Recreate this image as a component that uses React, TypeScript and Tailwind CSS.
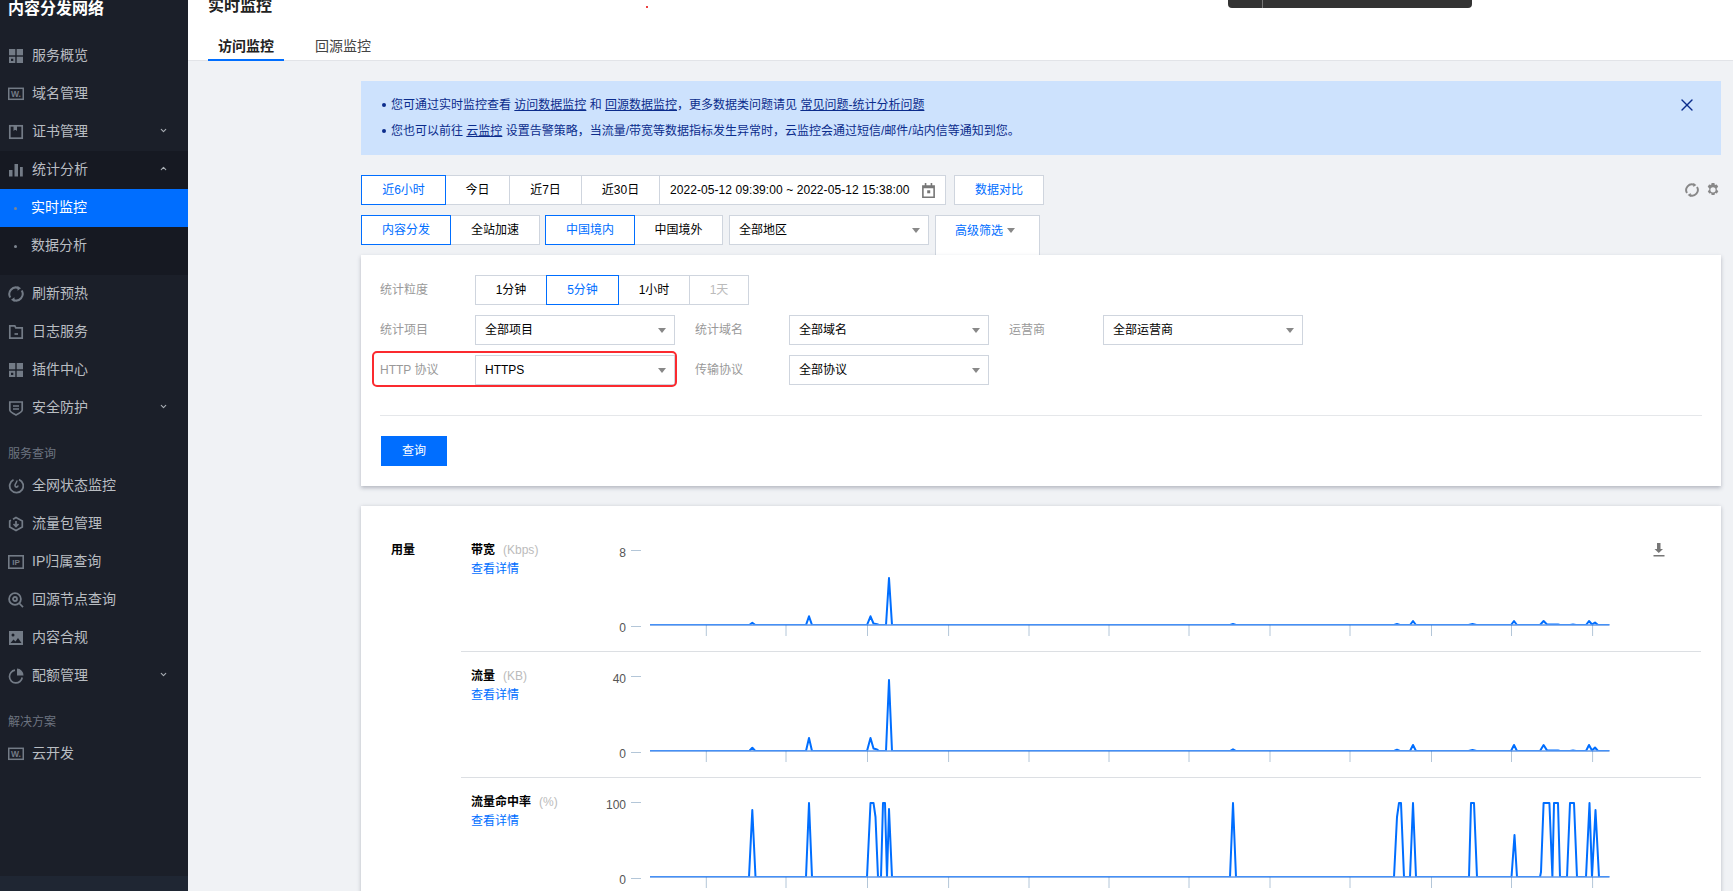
import { ChevronDown, ChevronUp, X } from "lucide-react";
import type { ReactNode } from "react";

type P = [number, number];
const s = (x: number, h: number, w = 3): P[] => [[x - w, 0], [x, h], [x + w, 0]];

const chart1: P[] = [
  [650, 0], ...s(752.3, 2.3), ...s(809, 8.7),
  [867, 0], [870.5, 8.7], [873.5, 1.5], [877, 0.8], [879, 0], [886, 0], [889, 47], [892, 0],
  ...s(1233, 1), ...s(1397, 1), ...s(1413, 4), ...s(1472.5, 1, 4), ...s(1514, 4),
  [1540, 0], [1543.6, 4], [1547, 0.6], [1558, 0.6], [1560, 0], ...s(1573, 0.6),
  [1586, 0], [1589, 4], [1592, 0.6], [1595, 2.5], [1598, 0], [1609.5, 0],
];
const chart2: P[] = [
  [650, 0], ...s(752.3, 3.3), ...s(809, 13),
  [867, 0], [870.5, 13], [873.5, 2.5], [877, 1.5], [879, 0], [886, 0], [889, 71], [892, 0],
  ...s(1233, 1.7), ...s(1397, 1.2), ...s(1413, 6), ...s(1472.5, 1, 4), ...s(1514, 6),
  [1540, 0], [1543.6, 6], [1547, 0.6], [1558, 0.6], [1560, 0], ...s(1573, 0.6),
  [1586, 0], [1589, 6], [1592, 0.6], [1595, 3.5], [1598, 0], [1609.5, 0],
];
const chart3: P[] = [
  [650, 0], [749, 0], [752.3, 67], [755.5, 0], [806, 0], [809, 74], [812, 0],
  [867, 0], [870.5, 74], [873.5, 74], [875.5, 60], [878, 0], [881, 0], [883, 74], [885, 74], [887, 0], [889, 68], [892, 0],
  [1230, 0], [1233, 74], [1236, 0],
  [1394, 0], [1397, 60], [1399, 74], [1401, 74], [1404, 0], [1410, 0], [1413, 74], [1416, 0],
  [1469, 0], [1471, 74], [1474, 74], [1477, 0], [1511.5, 0], [1514.5, 42], [1517, 0],
  [1540, 0], [1541, 5], [1543.6, 74], [1549.4, 74], [1552.4, 0], [1554, 74], [1558, 74], [1560, 0], [1567, 0],
  [1570, 74], [1574, 74], [1577, 0], [1586, 0], [1589.5, 74], [1592, 0], [1595.5, 67], [1599, 0], [1609.5, 0],
];

const xTicks = [706.3, 786, 867.5, 948.6, 1029, 1109, 1189, 1270, 1350, 1431.5, 1511.5, 1592.6];
const ic = "#737b86";

function GridIcon() {
  return (
    <svg width="16" height="16" viewBox="0 0 16 16" fill={ic}>
      <rect x="1" y="1" width="6.300" height="6.300" />
      <rect x="8.700" y="1" width="6.300" height="6.300" />
      <path fillRule="evenodd" d="M1 8.700h6.300V15H1zM3 10.700v2.300h2.300v-2.300z" />
      <rect x="8.700" y="8.700" width="6.300" height="6.300" />
    </svg>
  );
}
function WIcon() {
  return (
    <svg width="16" height="16" viewBox="0 0 16 16">
      <rect x="0.750" y="2.300" width="14.500" height="11" fill="none" stroke={ic} strokeWidth="1.500" />
      <text x="8" y="11" textAnchor="middle" fontSize="8.500" fontWeight="700" fill={ic}>W.</text>
    </svg>
  );
}
function CertIcon() {
  return (
    <svg width="16" height="16" viewBox="0 0 16 16" fill="none" stroke={ic} strokeWidth="1.700">
      <rect x="1.800" y="1.800" width="12.400" height="12.400" />
      <path d="M5.500 2v5l1.300-1h1L9 7V2z" fill={ic} stroke="none" />
    </svg>
  );
}
function BarsIcon() {
  return (
    <svg width="16" height="16" viewBox="0 0 16 16" fill={ic}>
      <rect x="1" y="8" width="3.500" height="6.500" />
      <rect x="6.500" y="2" width="3.500" height="12.500" />
      <rect x="12" y="5" width="2.800" height="9.500" />
    </svg>
  );
}
function RefreshIcon({ color = ic, size = 16, w = 2 }: { color?: string; size?: number; w?: number }) {
  return (
    <svg width={size} height={size} viewBox="0 0 16 16" fill="none" stroke={color} strokeWidth={w}>
      <path d="M2.300 11.500A6.600 6.600 0 0 1 10.500 2" />
      <path d="M13.700 4.500A6.600 6.600 0 0 1 5.500 14" />
      <path d="M9.500 0l3.500 2.300-3.500 2.400z" fill={color} stroke="none" />
      <path d="M6.500 16l-3.500-2.300 3.500-2.400z" fill={color} stroke="none" />
    </svg>
  );
}
function GearIcon() {
  return (
    <svg width="14" height="14" viewBox="0 0 14 14" fill="#888">
      <path
        fillRule="evenodd"
        d="M5.600 0h2.800l.5 2 1.900-.6 1.400 2.400-1.500 1.500.1 1.400 1.500 1.500-1.400 2.400-1.900-.6-.5 2H5.600l-.5-2-1.900.6-1.400-2.400 1.500-1.500L3.200 5.300 1.700 3.800l1.400-2.400 2 .6zM7 4.200a2.600 2.600 0 1 0 0 5.200 2.600 2.600 0 0 0 0-5.200z"
      />
    </svg>
  );
}
function FolderIcon() {
  return (
    <svg width="16" height="16" viewBox="0 0 16 16" fill="none" stroke={ic} strokeWidth="1.700">
      <path d="M1.800 14.200V1.800h5l1 2h6.400v10.400z" />
      <path d="M6.500 10h3.500" />
    </svg>
  );
}
function ShieldIcon() {
  return (
    <svg width="16" height="16" viewBox="0 0 16 16" fill="none" stroke={ic} strokeWidth="1.700">
      <path d="M1.800 2h12.400v8c0 2-3.400 3.600-6.200 5-2.800-1.400-6.200-3-6.200-5z" />
      <path d="M5 6h6M5 9h6" />
    </svg>
  );
}
function GaugeIcon() {
  return (
    <svg width="16" height="16" viewBox="0 0 16 16" fill="none" stroke={ic} strokeWidth="1.800">
      <path d="M5.500 1.800A6.800 6.800 0 1 0 11 1.600" />
      <path d="M8.800 2.500c.4 2-1.800 3-1.800 5 0 1 .7 1.600 1.400 1.600S10 8.400 10 7.500" strokeWidth="1.600" />
    </svg>
  );
}
function PackIcon() {
  return (
    <svg width="16" height="16" viewBox="0 0 16 16" fill="none" stroke={ic} strokeWidth="1.700">
      <path d="M5 3.200 8 1.500l6.300 3.400v6.200L8 14.500 1.700 11.100V4.900L3 4.200" />
      <path d="M8 5v5M5.500 8 8 10.500 10.500 8" />
    </svg>
  );
}
function IpIcon() {
  return (
    <svg width="16" height="16" viewBox="0 0 16 16">
      <rect x="0.800" y="1.800" width="14.400" height="12.400" fill="none" stroke={ic} strokeWidth="1.600" />
      <text x="8" y="11" textAnchor="middle" fontSize="8" fontWeight="700" fill={ic}>IP</text>
    </svg>
  );
}
function SearchIcon() {
  return (
    <svg width="16" height="16" viewBox="0 0 16 16" fill="none" stroke={ic} strokeWidth="1.800">
      <circle cx="7" cy="7" r="5.900" />
      <circle cx="7" cy="7" r="2" />
      <path d="M11 11l4 4.200" />
    </svg>
  );
}
function ImageIcon() {
  return (
    <svg width="16" height="16" viewBox="0 0 16 16" fill={ic}>
      <path fillRule="evenodd" d="M1 1h14v14H1zM5 3.500a1.500 1.500 0 1 0 0 3 1.500 1.500 0 0 0 0-3zM2.500 13l3-3.500 2 2L10 8l3.500 5z" />
    </svg>
  );
}
function PieIcon() {
  return (
    <svg width="16" height="16" viewBox="0 0 16 16" fill="none" stroke={ic} strokeWidth="1.700">
      <path d="M7 2.200A6.400 6.400 0 1 0 14.200 9.500" />
      <path d="M9 .6a6.700 6.700 0 0 1 6.500 6.900H9z" fill={ic} stroke="none" />
    </svg>
  );
}
function CalendarIcon() {
  return (
    <svg width="15" height="15" viewBox="0 0 14 14" fill="#777">
      <path fillRule="evenodd" d="M1 2h2.500V0h1.500v2h4V0h1.500v2H13v12H1zM2.500 5v7.500h9V5z" />
      <rect x="5.800" y="6.800" width="2.800" height="2.800" />
    </svg>
  );
}

function Caret() {
  return <span className="h-0 w-0 border-x-[4px] border-t-[5px] border-x-transparent border-t-[#888]" />;
}

function NavRow({ icon, label, sub, active, arrow }: { icon?: ReactNode; label: string; sub?: boolean; active?: boolean; arrow?: "down" | "up" }) {
  return (
    <div className={"flex h-[38px] items-center text-[14px] " + (active ? "bg-[#006eff] text-white" : "text-[#b9bdc2]")}>
      {sub ? (
        <span className="mr-[14px] ml-[14px] h-[3px] w-[3px] rounded-full bg-[#7d8590]" />
      ) : (
        <span className="mr-[8px] ml-[8px] flex w-[16px] items-center justify-center">{icon}</span>
      )}
      <span className="pb-[2px]">{label}</span>
      {arrow === "down" && <ChevronDown size={9} strokeWidth={3} className="mt-[-3px] mr-[20px] ml-auto text-[#a8adb3]" />}
      {arrow === "up" && <ChevronUp size={9} strokeWidth={3} className="mt-[-3px] mr-[20px] ml-auto text-[#a8adb3]" />}
    </div>
  );
}

function Sidebar() {
  return (
    <aside className="flex h-[891px] w-[188px] shrink-0 flex-col bg-[#1b1f29]">
      <div className="h-[37px] pl-[8px] text-[16px] leading-[18px] font-bold text-white">内容分发网络</div>
      <NavRow icon={<GridIcon />} label="服务概览" />
      <NavRow icon={<WIcon />} label="域名管理" />
      <NavRow icon={<CertIcon />} label="证书管理" arrow="down" />
      <div className="bg-[#161922] pb-[10px]">
        <NavRow icon={<BarsIcon />} label="统计分析" arrow="up" />
        <NavRow sub active label="实时监控" />
        <NavRow sub label="数据分析" />
      </div>
      <NavRow icon={<RefreshIcon />} label="刷新预热" />
      <NavRow icon={<FolderIcon />} label="日志服务" />
      <NavRow icon={<GridIcon />} label="插件中心" />
      <NavRow icon={<ShieldIcon />} label="安全防护" arrow="down" />
      <div className="h-[40px] pt-[18px] pl-[8px] text-[12px] leading-[18px] text-[#6d7480]">服务查询</div>
      <NavRow icon={<GaugeIcon />} label="全网状态监控" />
      <NavRow icon={<PackIcon />} label="流量包管理" />
      <NavRow icon={<IpIcon />} label="IP归属查询" />
      <NavRow icon={<SearchIcon />} label="回源节点查询" />
      <NavRow icon={<ImageIcon />} label="内容合规" />
      <NavRow icon={<PieIcon />} label="配额管理" arrow="down" />
      <div className="h-[40px] pt-[18px] pl-[8px] text-[12px] leading-[18px] text-[#6d7480]">解决方案</div>
      <NavRow icon={<WIcon />} label="云开发" />
      <div className="mt-auto h-[15px] bg-[#1f2633]" />
    </aside>
  );
}

function Seg({ label, active, disabled, className = "" }: { label: ReactNode; active?: boolean; disabled?: boolean; className?: string }) {
  return (
    <div
      className={
        "-ml-px flex h-[30px] items-center justify-center border bg-white text-[12px] first:ml-0 " +
        (active ? "relative z-10 border-[#006eff] text-[#006eff] " : "border-[#cfd5de] ") +
        (disabled ? "text-[#bbb] " : active ? "" : "text-black ") +
        className
      }
    >
      {label}
    </div>
  );
}

function Select({ value, className = "w-[200px]" }: { value: string; className?: string }) {
  return (
    <div className={"flex h-[30px] items-center justify-between border border-[#cfd5de] bg-white pr-[8px] pl-[9px] text-[12px] text-black " + className}>
      <span>{value}</span>
      <Caret />
    </div>
  );
}

function Label({ children, className = "w-[94px]" }: { children: ReactNode; className?: string }) {
  return <div className={"text-[12px] text-[#999] " + className}>{children}</div>;
}

function Chart({ top, bottom, data }: { top: string; bottom: string; data: P[] }) {
  const pts = data.map(([x, h]) => `${x},${99 - h}`).join(" ");
  const clip = `above-${top}`;
  return (
    <svg width="1020" height="125" viewBox="600 0 1020 125" className="shrink-0">
      <defs>
        <clipPath id={clip}>
          <rect x="640" y="0" width="980" height="98.500" />
        </clipPath>
      </defs>
      <text x="626" y="31" textAnchor="end" fontSize="12" fill="#555">{top}</text>
      <text x="626" y="106" textAnchor="end" fontSize="12" fill="#555">{bottom}</text>
      <path d="M631 24.500h10M631 100.500h10" stroke="#b3c6d8" />
      {xTicks.map((x) => (
        <path key={x} d={`M${x} 99v11`} stroke="#b3c6d8" />
      ))}
      <path d="M650 99H1609.500" stroke="#1668dc" strokeWidth="1.200" />
      <polyline points={pts} fill="none" stroke="#006eff" strokeWidth="2" strokeLinejoin="round" clipPath={`url(#${clip})`} />
    </svg>
  );
}

function ChartRow({ title, unit, top, bottom, data, last, download }: { title: string; unit: string; top: string; bottom: string; data: P[]; last?: boolean; download?: boolean }) {
  return (
    <div className={"flex h-[126px] pl-[10px] " + (last ? "" : "border-b border-[#dcdfe3]")}>
      <div className="w-[129px] shrink-0 pt-[15px] text-[12px] leading-[18px]">
        <div>
          <span className="font-bold text-black">{title}</span>
          <span className="ml-[8px] text-[#bbb]">({unit})</span>
        </div>
        <div className="mt-[1px] text-[#006eff]">查看详情</div>
      </div>
      <Chart top={top} bottom={bottom} data={data} />
      {download && (
        <svg width="12" height="14" viewBox="0 0 12 14" fill="#777" className="mt-[17px] ml-[33px]">
          <path d="M4 0h3.500v6h2.500L5.750 10 1.500 6H4z" />
          <rect x="0.500" y="12" width="11" height="1.500" />
        </svg>
      )}
    </div>
  );
}

export default function App() {
  return (
    <div className="flex h-[891px] w-[1733px] overflow-hidden bg-[#f0f2f5] [font-family:'Liberation_Sans','Noto_Sans_CJK_SC',sans-serif]">
      <Sidebar />
      <main className="min-w-0 flex-1">
        <header className="relative flex h-[61px] flex-col border-b border-[#e2e4e8] bg-white pl-[20px]">
          <h1 className="-mt-[5px] h-[22px] text-[16px] leading-[22px] font-bold text-[#222]">实时监控</h1>
          <div className="mt-[16px] flex text-[14px]">
            <div className="flex h-[28px] items-center border-b-2 border-[#006eff] px-[10px] font-bold text-[#222]">访问监控</div>
            <div className="ml-[21px] flex h-[28px] items-center border-b-2 border-transparent px-[10px] text-[#444]">回源监控</div>
          </div>
          <span className="absolute top-[6px] left-[458px] h-[2px] w-[2px] rounded-full bg-[#e60000]" />
          <div className="absolute top-0 left-[1040px] flex h-[8px] w-[244px] rounded-b-[4px] bg-[#333]">
            <span className="ml-[34px] w-px bg-[#777]" />
          </div>
        </header>

        <div className="pt-[20px] pr-[12px] pl-[173px]">
          <div className="relative h-[74px] bg-[#cde2fd] pt-[15px] pl-[21px] text-[12px] leading-[18px] text-[#0b2c8c]">
            <div className="flex items-center">
              <span className="mr-[5px] h-[4px] w-[4px] rounded-full bg-[#0b2c8c]" />
              <span>
                您可通过实时监控查看 <u>访问数据监控</u> 和 <u>回源数据监控</u>，更多数据类问题请见 <u>常见问题-统计分析问题</u>
              </span>
            </div>
            <div className="mt-[8px] flex items-center">
              <span className="mr-[5px] h-[4px] w-[4px] rounded-full bg-[#0b2c8c]" />
              <span>
                您也可以前往 <u>云监控</u> 设置告警策略，当流量/带宽等数据指标发生异常时，云监控会通过短信/邮件/站内信等通知到您。
              </span>
            </div>
            <X size={20} strokeWidth={1.6} className="absolute top-[14px] right-[24px] text-[#0b2c8c]" />
          </div>

          <div className="mt-[20px] flex h-[30px] items-center">
            <div className="flex">
              <Seg active label="近6小时" className="w-[85px]" />
              <Seg label="今日" className="w-[65px]" />
              <Seg label="近7日" className="w-[73px]" />
              <Seg label="近30日" className="w-[79px]" />
              <div className="-ml-px flex h-[30px] w-[287px] items-center justify-between border border-[#cfd5de] bg-white pr-[9px] pl-[10px] text-[12px] tracking-[0.07px] text-black">
                <span>2022-05-12 09:39:00 ~ 2022-05-12 15:38:00</span>
                <CalendarIcon />
              </div>
            </div>
            <div className="ml-[8px] flex h-[30px] w-[90px] items-center justify-center border border-[#cfd5de] bg-white text-[12px] text-[#006eff]">数据对比</div>
            <div className="ml-auto flex items-center gap-[7px] pr-[1px]">
              <RefreshIcon color="#888" size={14} w={2.200} />
              <GearIcon />
            </div>
          </div>

          <div className="mt-[10px] flex h-[30px] items-start">
            <div className="flex">
              <Seg active label="内容分发" className="w-[90px]" />
              <Seg label="全站加速" className="w-[90px]" />
            </div>
            <div className="ml-[5px] flex">
              <Seg active label="中国境内" className="w-[90px]" />
              <Seg label="中国境外" className="w-[89px]" />
            </div>
            <Select value="全部地区" className="ml-[6px] w-[200px]" />
            <div className="ml-[6px] flex h-[40px] w-[105px] items-start gap-[4px] border-x border-t border-[#cfd5de] bg-white pt-[7px] pl-[19px] text-[12px] leading-[16px] text-[#006eff]">
              <span>高级筛选</span>
              <span className="mt-[5px] flex"><Caret /></span>
            </div>
          </div>

          <section className="relative mt-[10px] h-[231px] bg-white px-[19px] pt-[20px] shadow-[0_2px_4px_rgba(54,58,80,0.32)]">
            <div className="flex items-center">
              <Label className="w-[95px]">统计粒度</Label>
              <div className="flex">
                <Seg label="1分钟" className="w-[72px]" />
                <Seg active label="5分钟" className="w-[73px]" />
                <Seg label="1小时" className="w-[72px]" />
                <Seg disabled label="1天" className="w-[60px]" />
              </div>
            </div>
            <div className="mt-[10px] flex items-center">
              <Label className="w-[95px]">统计项目</Label>
              <Select value="全部项目" />
              <Label className="ml-[20px] w-[94px]">统计域名</Label>
              <Select value="全部域名" />
              <Label className="ml-[20px] w-[94px]">运营商</Label>
              <Select value="全部运营商" />
            </div>
            <div className="relative mt-[10px] flex items-center">
              <Label className="w-[95px]">HTTP 协议</Label>
              <Select value="HTTPS" />
              <Label className="ml-[20px] w-[94px]">传输协议</Label>
              <Select value="全部协议" />
              <span className="absolute -top-[4px] -left-[8px] h-[36px] w-[305px] rounded-[5px] border-[2.5px] border-[#fb2a2f]" />
            </div>
            <div className="mt-[30px] border-t border-[#e5e7ea]" />
            <div className="mt-[20px] ml-px flex h-[30px] w-[66px] items-center justify-center bg-[#006eff] text-[12px] text-white">查询</div>
          </section>

          <section className="mt-[20px] flex h-[500px] bg-white pt-[20px] pr-[20px] pl-[30px] shadow-[0_1px_4px_rgba(54,58,80,0.3)]">
            <div className="w-[70px] shrink-0 pt-[15px] text-[12px] leading-[18px] font-bold text-black">用量</div>
            <div className="min-w-0 flex-1">
              <ChartRow title="带宽" unit="Kbps" top="8" bottom="0" data={chart1} download />
              <ChartRow title="流量" unit="KB" top="40" bottom="0" data={chart2} />
              <ChartRow title="流量命中率" unit="%" top="100" bottom="0" data={chart3} last />
            </div>
          </section>
        </div>
      </main>
    </div>
  );
}
